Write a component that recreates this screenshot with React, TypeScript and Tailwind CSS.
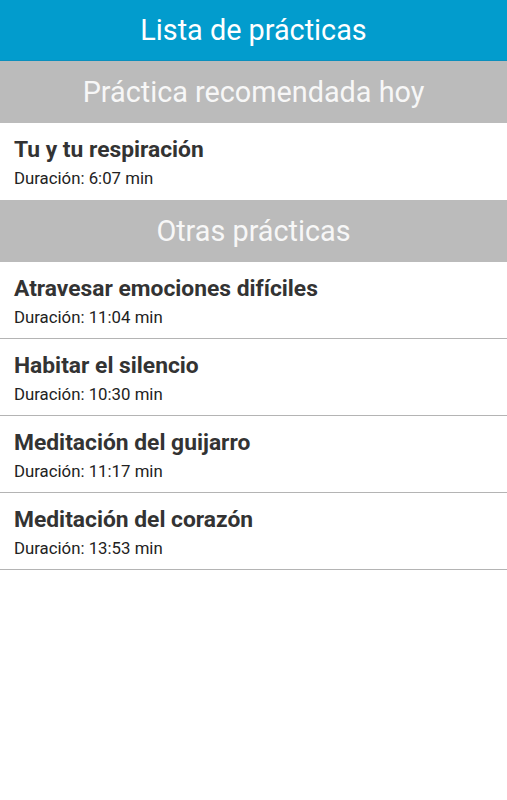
import React from 'react';

type Practice = { title: string; duration: string };

const recommended: Practice = { title: 'Tu y tu respiración', duration: '6:07' };

const others: Practice[] = [
  { title: 'Atravesar emociones difíciles', duration: '11:04' },
  { title: 'Habitar el silencio', duration: '10:30' },
  { title: 'Meditación del guijarro', duration: '11:17' },
  { title: 'Meditación del corazón', duration: '13:53' },
];

const SectionHeader: React.FC<{ label: string }> = ({ label }) => (
  <div className="h-[62px] bg-[#bbbbbb] flex items-center justify-center">
    <h2 className="text-[28.8px] text-[#f7f7f7] leading-none">{label}</h2>
  </div>
);

const PracticeRow: React.FC<{ practice: Practice; bordered?: boolean }> = ({ practice, bordered }) => (
  <div className={`h-[77px] px-[14px] pt-[13px] ${bordered ? 'border-b border-[#b4b4b4]' : ''}`}>
    <div className="text-[22.8px] font-bold text-[#333333] leading-[28px]">{practice.title}</div>
    <div className="text-[16.8px] text-[#222222] leading-[20px] mt-[4px]">Duración: {practice.duration} min</div>
  </div>
);

export default function App() {
  return (
    <div className="w-[507px] h-[800px] bg-white" style={{ fontFamily: 'Roboto, "Noto Sans", sans-serif' }}>
      <div className="h-[61px] bg-[#029ccd] flex items-center justify-center border-b border-[#0a8fbd]">
        <h1 className="text-[28.8px] text-white leading-none">Lista de prácticas</h1>
      </div>
      <SectionHeader label="Práctica recomendada hoy" />
      <PracticeRow practice={recommended} />
      <SectionHeader label="Otras prácticas" />
      {others.map((p) => (
        <PracticeRow key={p.title} practice={p} bordered />
      ))}
    </div>
  );
}
